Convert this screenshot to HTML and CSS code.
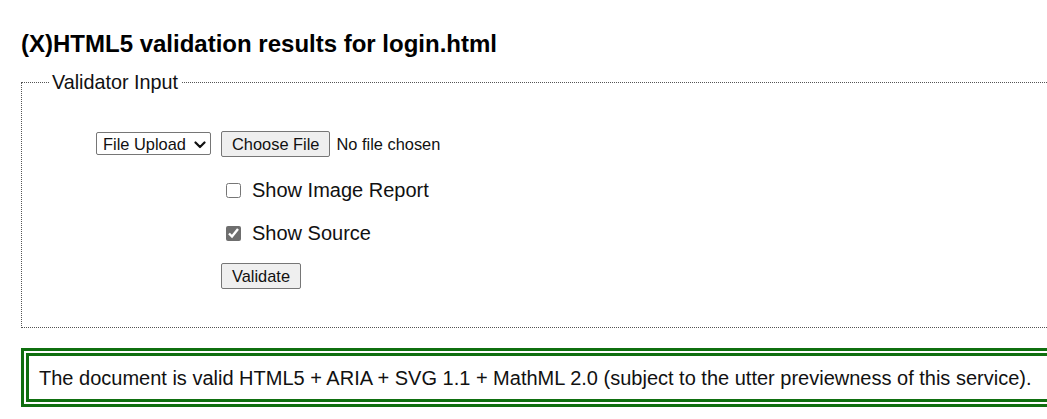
FILE: index.html
```html
<!DOCTYPE html>
<html lang="en">
<head>
<meta charset="utf-8">
<title>(X)HTML5 validation results for login.html</title>
<link rel="stylesheet" href="styles.css">
</head>
<body>
<div class="page">
  <h2 class="title">(X)HTML5 validation results for login.html</h2>
  <form class="inputs" onsubmit="return false">
    <fieldset class="box">
      <legend class="box-legend">Validator Input</legend>
      <div class="grid">
        <div class="cell-select">
          <span class="select-wrap">
            <select class="method">
              <option>File Upload</option>
            </select>
            <svg class="chevron" width="12" height="8" viewBox="0 0 12 8" aria-hidden="true"><path d="M1.5 1.5 L6 6 L10.5 1.5" fill="none" stroke="#111" stroke-width="2.2" stroke-linecap="round" stroke-linejoin="round"/></svg>
          </span>
        </div>
        <div class="rows">
          <div class="row row-file">
            <input class="file" type="file">
          </div>
          <label class="row row-check"><input class="check" type="checkbox"> Show Image Report</label>
          <label class="row row-check"><input class="check" type="checkbox" checked> Show Source</label>
          <div class="row row-submit"><button class="btn" type="button">Validate</button></div>
        </div>
      </div>
    </fieldset>
  </form>
  <p class="valid">The document is valid HTML5 + ARIA + SVG 1.1 + MathML 2.0 (subject to the utter previewness of this service).</p>
</div>
</body>
</html>
```
FILE: styles.css
```css
html, body {
  margin: 0;
  padding: 0;
  overflow: hidden;
  background: #fff;
}
body {
  font-family: "Liberation Sans", Arial, sans-serif;
  color: #111;
}
.page {
  width: 1100px;
  padding: 0 0 0 21px;
}
.title {
  margin: 30px 0 0 0;
  font-size: 24px;
  font-weight: bold;
  line-height: 28px;
  color: #000;
}
.inputs {
  margin: 13px 0 0 0;
}
.box {
  margin: 0;
  padding: 38px 0 38px 0;
  border: 1px dotted #555;
  min-width: 0;
}
.box-legend {
  margin-left: 27px;
  padding: 0 3px;
  font-size: 19.8px;
  line-height: 22px;
  color: #111;
}
.grid {
  display: grid;
  grid-template-columns: 115px auto;
  column-gap: 10px;
  margin-left: 74px;
}
.cell-select {
  padding-top: 1px;
}
.select-wrap {
  position: relative;
  display: inline-block;
}
.method {
  -webkit-appearance: none;
  appearance: none;
  width: 115px;
  height: 23px;
  font-family: "Liberation Sans", Arial, sans-serif;
  font-size: 16.4px;
  color: #111;
  border: 1px solid #767676;
  border-radius: 2px;
  background: #fff;
  padding: 0 0 0 6px;
  margin: 0;
  display: block;
}
.chevron {
  position: absolute;
  right: 5px;
  top: 9px;
  pointer-events: none;
}
.rows {
  display: flex;
  flex-direction: column;
  align-items: flex-start;
}
.row {
  height: 26px;
  display: flex;
  align-items: center;
}
.row-file {
  margin-bottom: 20px;
}
.row-check {
  font-size: 20px;
  margin-bottom: 17px;
  color: #111;
}
.file {
  font-family: "Liberation Sans", Arial, sans-serif;
  font-size: 16.4px;
  color: #111;
  margin: 0;
}
.file::file-selector-button {
  font-family: "Liberation Sans", Arial, sans-serif;
  font-size: 16.4px;
  height: 26px;
  padding: 0 10px;
  margin: 0 6px 0 0;
  background: #efefef;
  border: 1px solid #767676;
  border-radius: 2px;
  color: #111;
}
.check {
  width: 15px;
  height: 15px;
  margin: 0 11px 0 5px;
  accent-color: #6e6e6e;
}
.btn {
  font-family: "Liberation Sans", Arial, sans-serif;
  font-size: 16.4px;
  height: 26px;
  padding: 0 10px;
  margin: 0;
  background: #efefef;
  border: 1px solid #767676;
  border-radius: 2px;
  color: #111;
}
.valid {
  margin: 20px 0 0 0;
  border: 8px double #0f6f0f;
  padding: 10px 10px 9px 10px;
  font-size: 20px;
  line-height: 24px;
  color: #111;
}
```
